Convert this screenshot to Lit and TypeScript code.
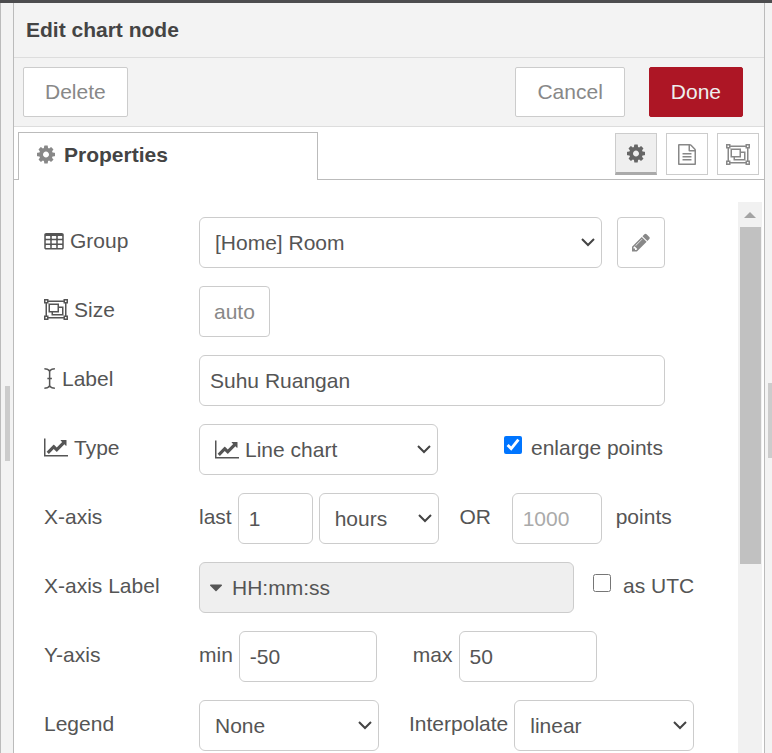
import { LitElement, html, css } from "lit";
import { customElement, state } from "lit/decorators.js";

// x, y and width are in glyph units, 1792 units to the em
interface Glyph {
  x: number;
  y?: number;
  width: number;
  d: string;
}

const glyphs: Record<string, Glyph> = {
  cog: {
    x: 128,
    width: 1536,
    d: "M1152 896q0-106-75-181t-181-75-181 75-75 181 75 181 181 75 181-75 75-181zm512-109v222q0 12-8 23t-20 13l-185 28q-19 54-39 91 35 50 107 138 10 12 10 25t-9 23q-27 37-99 108t-94 71q-12 0-26-9l-138-108q-44 23-91 38-16 136-29 186-7 28-36 28h-222q-14 0-24.5-8.5t-11.5-21.5l-28-184q-49-16-90-37l-141 107q-10 9-25 9-14 0-25-11-126-114-165-168-7-10-7-23 0-12 8-23 15-21 51-66.5t54-70.5q-27-50-41-99l-183-27q-13-2-21-12.5t-8-23.5v-222q0-12 8-23t19-13l186-28q14-46 39-92-40-57-107-138-10-12-10-24 0-10 9-23 26-36 98.5-107.5t94.5-71.5q13 0 26 10l138 107q44-23 91-38 16-136 29-186 7-28 36-28h222q14 0 24.5 8.5t11.5 21.5l28 184q49 16 90 37l142-107q9-9 24-9 13 0 25 10 129 119 165 170 7 8 7 22 0 12-8 23-15 21-51 66.5t-54 70.5q26 50 41 98l183 28q13 2 21 12.5t8 23.5z",
  },
  pencil: {
    x: 128,
    width: 1536,
    d: "M491 1536l91-91-235-235-91 91v107h128v128h107zm523-928q0-22-22-22-10 0-17 7l-542 542q-7 7-7 17 0 22 22 22 10 0 17-7l542-542q7-7 7-17zm-54-192l416 416-832 832h-416v-416zm683 96q0 53-37 90l-166 166-416-416 166-165q36-38 90-38 53 0 91 38l235 234q37 39 37 91z",
  },
  chart: {
    x: -64,
    width: 2048,
    d: "M1984 1536v128h-2048v-1536h128v1408h1920zm-128-1248v435q0 21-19.5 29.5t-35.5-7.5l-121-121-633 633q-10 10-23 10t-23-10l-233-233-416 416-192-192 585-585q10-10 23-10t23 10l233 233 464-464-121-121q-16-16-7.5-35.5t29.5-19.5h435q14 0 23 9t9 23z",
  },
  file: {
    x: 128,
    width: 1536,
    d: "M1596 380q28 28 48 76t20 88v1152q0 40-28 68t-68 28h-1344q-40 0-68-28t-28-68v-1600q0-40 28-68t68-28h896q40 0 88 20t76 48zm-444-244v376h376q-10-29-22-41l-313-313q-12-12-41-22zm384 1528v-1024h-416q-40 0-68-28t-28-68v-416h-768v1536h1280zm-1024-864q0-14 9-23t23-9h704q14 0 23 9t9 23v64q0 14-9 23t-23 9h-704q-14 0-23-9t-9-23v-64zm736 224q14 0 23 9t9 23v64q0 14-9 23t-23 9h-704q-14 0-23-9t-9-23v-64q0-14 9-23t23-9h704zm0 256q14 0 23 9t9 23v64q0 14-9 23t-23 9h-704q-14 0-23-9t-9-23v-64q0-14 9-23t23-9h704z",
  },
  table: {
    x: 64,
    y: -128,
    width: 1664,
    d: "M224 128h1344q66 0 113 47t47 113v1088q0 66-47 113t-113 47h-1344q-66 0-113-47t-47-113v-1088q0-66 47-113t113-47zM192 416v160q0 32 32 32h320q32 0 32-32v-160q0-32-32-32h-320q-32 0-32 32zM704 416v160q0 32 32 32h320q32 0 32-32v-160q0-32-32-32h-320q-32 0-32 32zM1216 416v160q0 32 32 32h320q32 0 32-32v-160q0-32-32-32h-320q-32 0-32 32zM192 768v224q0 32 32 32h320q32 0 32-32v-224q0-32-32-32h-320q-32 0-32 32zM704 768v224q0 32 32 32h320q32 0 32-32v-224q0-32-32-32h-320q-32 0-32 32zM1216 768v224q0 32 32 32h320q32 0 32-32v-224q0-32-32-32h-320q-32 0-32 32zM192 1184v192q0 32 32 32h320q32 0 32-32v-192q0-32-32-32h-320q-32 0-32 32zM704 1184v192q0 32 32 32h320q32 0 32-32v-192q0-32-32-32h-320q-32 0-32 32zM1216 1184v192q0 32 32 32h320q32 0 32-32v-192q0-32-32-32h-320q-32 0-32 32z",
  },
  group: {
    x: 0,
    width: 2048,
    d: "M0 0h384v128h1280v-128h384v384h-128v1024h128v384h-384v-128h-1280v128h-384v-384h128v-1024h-128zM128 128h128v128h-128zM1792 128h128v128h-128zM128 1536h128v128h-128zM1792 1536h128v128h-128zM384 256v128h-128v1024h128v128h1280v-128h128v-1024h-128v-128zM384 384h896v256h384v768h-1024v-256h-256zM512 512h640v512h-640zM1280 768v384h-512v128h768v-512z",
  },
  cursor: {
    x: 0,
    width: 1024,
    d: "M928 128q-300 0-384 180v524h128v128h-128v524q84 180 384 180v128q-300 0-448-150-148 150-448 150v-128q300 0 384-180v-524h-128v-128h128v-524q-84-180-384-180v-128q300 0 448 150 148-150 448-150z",
  },
  caret: {
    x: 384,
    width: 1024,
    d: "M1408 704q0 26-19 45l-448 448q-19 19-45 19t-45-19l-448-448q-19-19-19-45t19-45 45-19h896q26 0 45 19t19 45z",
  },
};

function icon(name: string) {
  const g = glyphs[name];
  return html`<svg
    class="icon"
    aria-hidden="true"
    width=${Math.round((g.width * 21) / 1792)}
    height="21"
    viewBox="${g.x} ${g.y ?? 0} ${g.width} 1792"
  >
    <path fill="currentColor" fill-rule="evenodd" d=${g.d}></path>
  </svg>`;
}

@customElement("app-root")
export class AppRoot extends LitElement {
  @state() private editorTab = "properties";

  static styles = css`
    :host {
      display: flex;
      flex-direction: column;
      box-sizing: border-box;
      height: 100vh;
      overflow: hidden;
      border-top: 3px solid #4d4d4f;
      background: #f3f3f3;
      color: #555;
      font: 21px/30px "Liberation Sans", Arial, sans-serif;
    }
    *,
    *::before {
      box-sizing: border-box;
    }
    button,
    input,
    select {
      font: inherit;
      color: inherit;
      margin: 0;
    }
    .icon {
      display: block;
      flex: none;
    }
    .workspace {
      display: flex;
      flex: 1;
      min-height: 0;
    }
    .separator {
      display: flex;
      align-items: center;
      flex: none;
      padding-top: 90px;
    }
    .separator.left {
      width: 13px;
      padding-left: 4px;
      border-left: 1px solid #bbb;
    }
    .separator.right {
      width: 7px;
      padding-left: 3px;
      padding-bottom: 6px;
      overflow: hidden;
    }
    .grip {
      flex: none;
      width: 5px;
      height: 75px;
      background: #ccc;
    }
    .tray {
      display: flex;
      flex-direction: column;
      flex: 1;
      min-width: 0;
      border: solid #bbb;
      border-width: 0 1px;
      background: #fff;
    }
    .title {
      margin: 0;
      padding: 12px;
      border-bottom: 1px solid #ddd;
      background: #f3f3f3;
      color: #444;
      font-size: 21px;
      line-height: 30px;
    }
    .toolbar {
      display: flex;
      align-items: center;
      gap: 24px;
      padding: 9px 21px 9px 9px;
      border-bottom: 1px solid #ddd;
      background: #f3f3f3;
    }
    .push {
      margin-left: auto;
    }
    .button {
      display: flex;
      align-items: center;
      justify-content: center;
      height: 50px;
      padding: 0 21px;
      border: 1px solid #ccc;
      border-radius: 2px;
      background: #fff;
      color: #888;
    }
    .button.primary {
      border-color: #ad1625;
      background: #ad1625;
      color: #eee;
    }
    .button.small {
      height: 51px;
      padding: 0 14px;
      border-radius: 4px;
    }
    .tabs {
      display: flex;
      align-items: stretch;
      padding-top: 5px;
    }
    .tabs::before {
      content: "";
      width: 4px;
      border-bottom: 1px solid #bbb;
    }
    .tab {
      display: flex;
      align-items: center;
      gap: 9px;
      width: 300px;
      padding: 0 18px 4px;
      border: solid #bbb;
      border-width: 1px 1px 0;
      background: #fff;
      color: #888;
      font-weight: bold;
    }
    .tab span {
      color: #444;
    }
    .tab-icons {
      display: flex;
      flex: 1;
      justify-content: flex-end;
      gap: 9px;
      padding: 1px 5px 4px 0;
      border-bottom: 1px solid #bbb;
    }
    .tab-icon {
      display: flex;
      align-items: center;
      justify-content: center;
      width: 42px;
      height: 42px;
      padding: 0;
      border: 1px solid #ccc;
      background: #fff;
      color: #888;
    }
    .tab-icon.selected {
      border-bottom: 3px solid #aaa;
      background: #efefef;
      color: #666;
    }
    .content {
      display: flex;
      flex: 1;
      min-height: 0;
      margin-top: 22px;
    }
    .form {
      display: flex;
      flex-direction: column;
      gap: 18px;
      flex: 1;
      min-width: 0;
      padding: 15px 28px 0 30px;
      overflow: hidden;
    }
    .row {
      display: flex;
      align-items: center;
      flex: none;
      height: 51px;
      white-space: nowrap;
    }
    .name {
      display: flex;
      align-items: center;
      gap: 6px;
      flex: none;
      width: 155px;
      line-height: 31px;
      padding-bottom: 4px;
    }
    .pair,
    .fields {
      display: flex;
      align-items: center;
      gap: 6px;
      height: 51px;
    }
    .pair label,
    .between {
      line-height: 31px;
      padding-bottom: 4px;
    }
    .fields {
      width: 70%;
      gap: 15px;
    }
    .text,
    .select {
      height: 51px;
      border: 1px solid #ccc;
      border-radius: 6px;
      background: #fff;
      outline: none;
    }
    .text {
      padding: 0 10px;
    }
    .text::placeholder {
      color: #aaa;
      opacity: 1;
    }
    .select {
      appearance: none;
      padding: 0 30px 0 15px;
      background: #fff
        url("data:image/svg+xml,%3Csvg xmlns='http://www.w3.org/2000/svg' width='14' height='9'%3E%3Cpath d='M1 1l6 6 6-6' fill='none' stroke='%23444' stroke-width='2'/%3E%3C/svg%3E")
        no-repeat right 6px center;
    }
    .grow {
      flex: 1;
      min-width: 0;
    }
    .w75 {
      width: 75px;
    }
    .w90 {
      width: 90px;
    }
    .w120 {
      width: 120px;
    }
    .w138 {
      width: 138px;
    }
    .w180 {
      width: 180px;
    }
    .type {
      position: relative;
      color: #555;
    }
    .type .icon {
      position: absolute;
      left: 16px;
      top: 15px;
      pointer-events: none;
    }
    .type .select {
      width: 239px;
      padding-left: 45px;
    }
    .typed {
      display: flex;
      align-items: center;
      width: 375px;
      height: 51px;
      border: 1px solid #ccc;
      border-radius: 6px;
      background: #efefef;
    }
    .typed button {
      display: flex;
      align-items: center;
      gap: 10px;
      width: 100%;
      height: 100%;
      padding: 0 10px;
      border: 0;
      background: none;
    }
    .check {
      width: 18px;
      height: 18px;
      margin-bottom: 9px;
      accent-color: #0075ff;
    }
    .between {
      width: 73px;
      text-align: center;
    }
    .enlarge {
      margin-left: 66px;
      gap: 9px;
    }
    .utc {
      margin-left: 19px;
      gap: 12px;
    }
    .points {
      gap: 14px;
    }
    .maximum {
      margin-left: 36px;
    }
    .interpolate {
      margin-left: 30px;
    }
    .scrollbar {
      display: flex;
      flex-direction: column;
      align-items: center;
      flex: none;
      width: 24px;
      margin-right: 2px;
      background: #f1f1f1;
    }
    .scroll-up {
      display: flex;
      align-items: center;
      justify-content: center;
      flex: none;
      width: 24px;
      height: 25px;
      padding: 0;
      border: 0;
      background: none;
      color: #a3a3a3;
    }
    .thumb {
      flex: none;
      width: 21px;
      height: 337px;
      background: #c1c1c1;
    }
  `;

  private tabIcon(id: string, glyph: string, title: string) {
    return html`<button
      class="tab-icon ${this.editorTab === id ? "selected" : ""}"
      aria-label=${title}
      @click=${() => (this.editorTab = id)}
    >
      ${icon(glyph)}
    </button>`;
  }

  render() {
    return html`
      <div class="workspace">
        <div class="separator left"><div class="grip"></div></div>
        <main class="tray">
          <h1 class="title">Edit chart node</h1>
          <div class="toolbar">
            <button class="button">Delete</button>
            <button class="button push">Cancel</button>
            <button class="button primary">Done</button>
          </div>
          <div class="tabs">
            <div class="tab">${icon("cog")}<span>Properties</span></div>
            <div class="tab-icons">
              ${this.tabIcon("properties", "cog", "Properties")}
              ${this.tabIcon("description", "file", "Description")}
              ${this.tabIcon("appearance", "group", "Appearance")}
            </div>
          </div>
          <div class="content">
            <form class="form" @submit=${(e: Event) => e.preventDefault()}>
              <div class="row">
                <label class="name" for="group">${icon("table")}Group</label>
                <div class="fields">
                  <select class="select grow" id="group">
                    <option>[Home] Room</option>
                  </select>
                  <button class="button small" type="button" aria-label="Edit group">
                    ${icon("pencil")}
                  </button>
                </div>
              </div>
              <div class="row">
                <label class="name" for="size">${icon("group")}Size</label>
                <button class="button small" type="button" id="size">auto</button>
              </div>
              <div class="row">
                <label class="name" for="label">${icon("cursor")}Label</label>
                <div class="fields">
                  <input class="text grow" id="label" value="Suhu Ruangan" />
                </div>
              </div>
              <div class="row">
                <label class="name" for="type">${icon("chart")}Type</label>
                <div class="type">
                  <select class="select" id="type">
                    <option>Line chart</option>
                  </select>
                  ${icon("chart")}
                </div>
                <div class="pair enlarge">
                  <input class="check" type="checkbox" id="enlarge" checked />
                  <label for="enlarge">enlarge points</label>
                </div>
              </div>
              <div class="row">
                <label class="name" for="last">X-axis</label>
                <div class="pair">
                  <label for="last">last</label>
                  <input class="text w75" id="last" value="1" />
                  <select class="select w120" aria-label="Time unit">
                    <option>hours</option>
                  </select>
                </div>
                <span class="between">OR</span>
                <div class="pair points">
                  <input class="text w90" id="points" placeholder="1000" />
                  <label for="points">points</label>
                </div>
              </div>
              <div class="row">
                <label class="name" for="format">X-axis Label</label>
                <div class="typed">
                  <button type="button" id="format">${icon("caret")}HH:mm:ss</button>
                </div>
                <div class="pair utc">
                  <input class="check" type="checkbox" id="utc" />
                  <label for="utc">as UTC</label>
                </div>
              </div>
              <div class="row">
                <label class="name" for="min">Y-axis</label>
                <div class="pair">
                  <label for="min">min</label>
                  <input class="text w138" id="min" value="-50" />
                </div>
                <div class="pair maximum">
                  <label for="max">max</label>
                  <input class="text w138" id="max" value="50" />
                </div>
              </div>
              <div class="row">
                <label class="name" for="legend">Legend</label>
                <select class="select w180" id="legend">
                  <option>None</option>
                </select>
                <div class="pair interpolate">
                  <label for="interpolate">Interpolate</label>
                  <select class="select w180" id="interpolate">
                    <option>linear</option>
                  </select>
                </div>
              </div>
            </form>
            <div class="scrollbar">
              <button class="scroll-up" aria-label="Scroll up">
                <svg width="12" height="6" viewBox="0 0 12 6" aria-hidden="true">
                  <path fill="currentColor" d="M6 0l6 6H0z"></path>
                </svg>
              </button>
              <div class="thumb"></div>
            </div>
          </div>
        </main>
        <div class="separator right"><div class="grip"></div></div>
      </div>
    `;
  }
}
